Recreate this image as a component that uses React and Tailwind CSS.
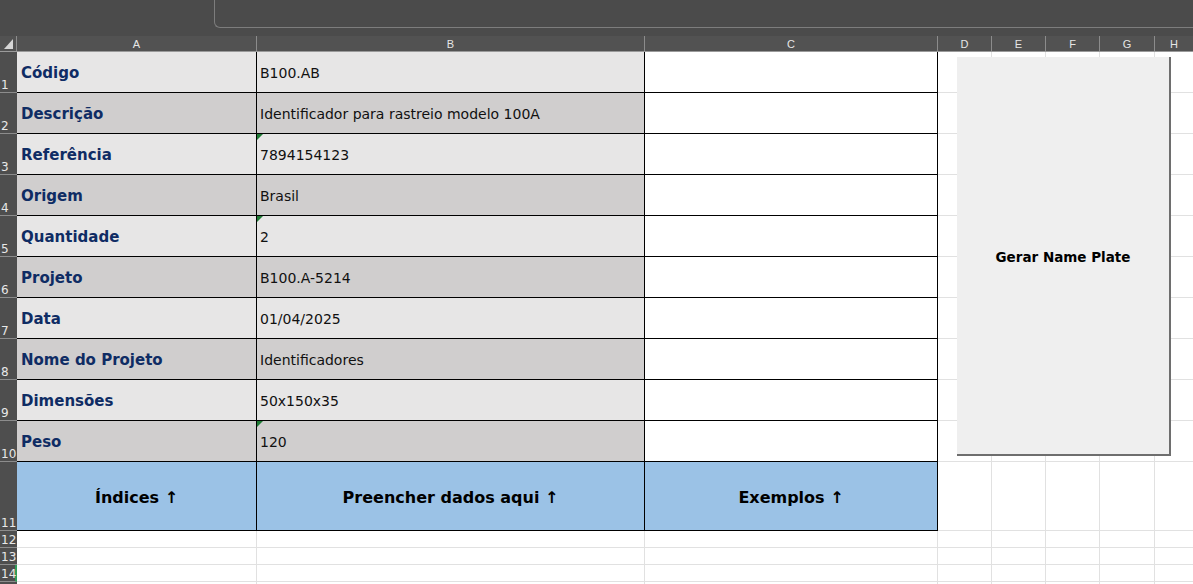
import React from "react";

const rows = [
  ["Código", "B100.AB", false],
  ["Descrição", "Identificador para rastreio modelo 100A", false],
  ["Referência", "7894154123", true],
  ["Origem", "Brasil", false],
  ["Quantidade", "2", true],
  ["Projeto", "B100.A-5214", false],
  ["Data", "01/04/2025", false],
  ["Nome do Projeto", "Identificadores", false],
  ["Dimensões", "50x150x35", false],
  ["Peso", "120", true],
];

const cols = "grid grid-cols-[17px_240px_388px_293px_54px_54px_54px_55px_1fr]";

function RowHead({ n, h, sel }) {
  return (
    <div
      className={`bg-[#4e4e4e] border-b border-[#8c8c8c] flex items-end pl-[1px] text-[12px] leading-[13px] text-[#e8e8e8] ${sel ? "border-r-2 border-r-[#2e9a57]" : ""}`}
      style={{ height: h }}
    >
      {n}
    </div>
  );
}

function GridCells({ h }) {
  return (
    <>
      <div className="border-r border-b border-[#e1e1e1] bg-white" style={{ height: h }} />
      <div className="border-r border-b border-[#e1e1e1] bg-white" style={{ height: h }} />
      <div className="border-r border-b border-[#e1e1e1] bg-white" style={{ height: h }} />
      <div className="border-r border-b border-[#e1e1e1] bg-white" style={{ height: h }} />
      <div className="border-b border-[#e1e1e1] bg-white" style={{ height: h }} />
    </>
  );
}

export default function App() {
  return (
    <div className="relative w-[1193px] h-[584px] overflow-hidden bg-white font-['DejaVu_Sans',sans-serif]">
      {/* top bar */}
      <div className="h-[36px] bg-[#4b4b4b]">
        <div className="ml-[214px] h-[28px] border-l border-b border-[#7d7d7d] rounded-bl-[6px]" />
      </div>
      {/* column headers */}
      <div className={`${cols} h-[16px] bg-[#525252] border-b border-[#9a9a9a] text-[11px] leading-[14px] text-[#e6e6e6] font-['Liberation_Sans',sans-serif]`}>
        <div className="relative border-r border-[#8c8c8c]">
          <svg className="absolute left-[4px] top-[3px]" width="9" height="10" viewBox="0 0 9 10">
            <polygon points="9,0 9,10 0,10" fill="#d6d6d6" />
          </svg>
        </div>
        {["A", "B", "C", "D", "E", "F", "G", "H"].map((c, i) => (
          <div key={c} className={`text-center pt-[1px] ${i < 7 ? "border-r border-[#8c8c8c]" : ""}`}>
            {c}
          </div>
        ))}
      </div>
      {/* body */}
      <div className={cols}>
        {rows.map(([label, val, tri], i) => {
          const bg = i % 2 === 0 ? "bg-[#e7e6e6]" : "bg-[#d0cece]";
          return (
            <React.Fragment key={label}>
              <RowHead n={i + 1} h={41} />
              <div className={`${bg} h-[41px] border-r border-b border-black flex items-center pl-[4px] pt-[3px] text-[15px] font-bold text-[#0f2c64]`}>
                {label}
              </div>
              <div className={`${bg} relative h-[41px] border-r border-b border-black flex items-center pl-[3px] pt-[2px] text-[14px] text-[#111]`}>
                {tri && (
                  <svg className="absolute left-0 top-0" width="6" height="6" viewBox="0 0 6 6">
                    <polygon points="0,0 6,0 0,6" fill="#1e7b34" />
                  </svg>
                )}
                <span>{val}</span>
              </div>
              <div className="bg-white h-[41px] border-r border-b border-black" />
              <GridCells h={41} />
            </React.Fragment>
          );
        })}
        <RowHead n={11} h={69} />
        <div className="bg-[#9bc2e6] h-[69px] border-r border-b border-black flex items-center justify-center pt-[3px] text-[16px] font-bold text-black">
          Índices ↑
        </div>
        <div className="bg-[#9bc2e6] h-[69px] border-r border-b border-black flex items-center justify-center pt-[3px] text-[16px] font-bold text-black">
          Preencher dados aqui ↑
        </div>
        <div className="bg-[#9bc2e6] h-[69px] border-r border-b border-black flex items-center justify-center pt-[3px] text-[16px] font-bold text-black">
          Exemplos ↑
        </div>
        <GridCells h={69} />
        {[12, 13, 14, 15].map((n) => (
          <React.Fragment key={n}>
            <RowHead n={n === 15 ? "" : n} h={17} sel={n === 14} />
            <div className="h-[17px] border-r border-b border-[#e1e1e1]" />
            <div className="h-[17px] border-r border-b border-[#e1e1e1]" />
            <div className="h-[17px] border-r border-b border-[#e1e1e1]" />
            <GridCells h={17} />
          </React.Fragment>
        ))}
      </div>
      {/* button shape */}
      <div className="absolute left-[957px] top-[57px] w-[214px] h-[399px] bg-[#efefef] border-r-2 border-b-2 border-[#6e6e6e] flex items-center justify-center">
        <span className="text-[13.5px] font-bold text-black pt-[3px]">Gerar Name Plate</span>
      </div>
    </div>
  );
}
